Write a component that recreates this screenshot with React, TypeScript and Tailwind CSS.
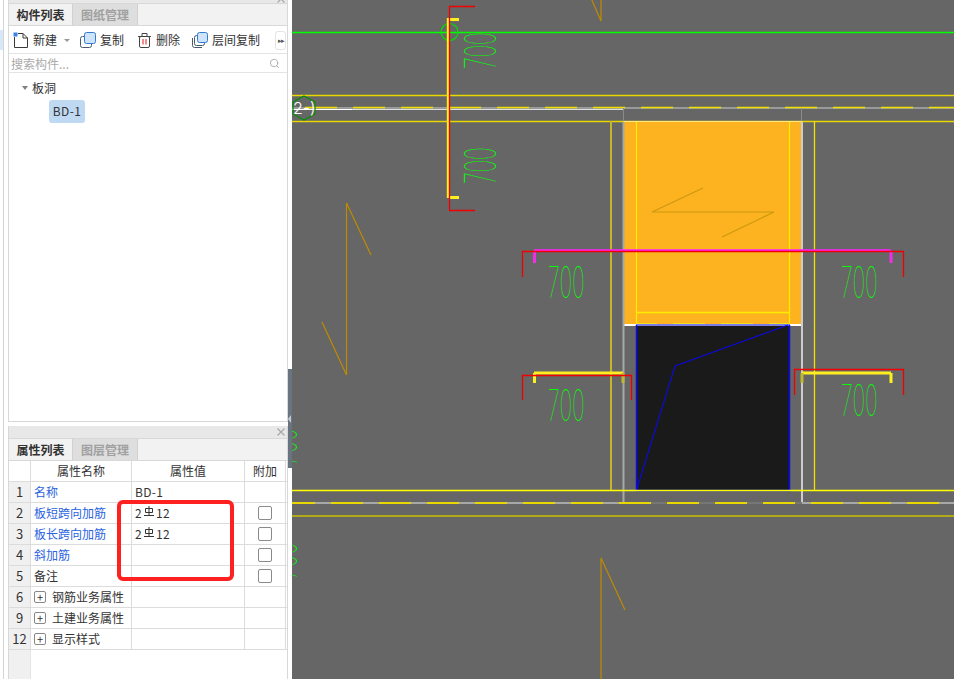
import React from "react";
import { Search } from "lucide-react";

const font = { fontFamily: '"Noto Sans CJK SC", sans-serif' };

function Num({ x, y, r }: { x: number; y: number; r?: boolean }) {
  return (
    <text
      transform={`translate(${x} ${y}) ${r ? "rotate(-90)" : ""} scale(0.5 1)`}
      fontFamily="Inter, sans-serif"
      fontWeight={100}
      fontSize={43}
      fill="#00ff00"
    >
      700
    </text>
  );
}

function L({ d, c, w = 1, dash, off }: { d: string; c: string; w?: number; dash?: string; off?: number }) {
  return <path d={d} stroke={c} strokeWidth={w} fill="none" strokeDasharray={dash} strokeDashoffset={off} />;
}

function Canvas() {
  const brown = "#c08a00";
  const red = "#f00000";
  return (
    <svg width={662} height={679} viewBox="292 0 662 679" className="block">
      <rect x={292} y={0} width={662} height={679} fill="#666666" />
      {/* brown zigzags */}
      <path d="M591 -2L601 21V-2" stroke={brown} strokeWidth={1.2} fill="none" />
      <path d="M371 255L346.5 203V375L322 322" stroke={brown} strokeWidth={1.2} fill="none" />
      <path d="M625 610L601 558V679" stroke={brown} strokeWidth={1.2} fill="none" />
      {/* green axis */}
      <L d="M292 32.5H954" c="#00ff00" w={1.4} />
      {/* upper beams */}
      <L d="M292 95.5H954" c="#e8d800" w={1.6} />
      <L d="M292 121.5H954" c="#e8d800" w={1.6} />
      <L d="M292 108H954" c="#9a9a9a" w={2} />
      <L d="M292 109.5H623" c="#dddddd" />
      <L d="M292 109.5H352" c="#ffffff" />
      <L d="M292 107.5H954" c="#f0e000" w={1.4} dash="32 16" off={-13} />
      <L d="M623.5 108V121M801.5 108V121" c="#8a8a8a" />
      {/* orange slab */}
      <rect x={624} y={121} width={178} height={204} fill="#fdb21f" />
      <L d="M624 121.5H802" c="#fde88a" />
      <path d="M703 188L652 212H774L722 237" stroke="#cc9a10" strokeWidth={1.2} fill="none" />
      <L d="M636.5 122V325M789.5 122V325" c="#ffee00" w={1.2} />
      <L d="M636 312.5H790" c="#ffee00" w={1.4} />
      <L d="M636 323.5H790" c="#f0e020" w={1.2} dash="32 16" off={11} />
      {/* black opening */}
      <rect x={636} y={325} width={153.5} height={165} fill="#1a1a1a" />
      <L d="M624 325H802" c="#ffffff" w={2} />
      <L d="M636 325H790" c="#7b7be8" w={2} />
      <L d="M636.5 325V490.5H789.5V325" c="#0808ff" w={1.5} />
      <path d="M636.5 490L675 366L788 325" stroke="#0808ff" fill="none" />
      {/* verticals */}
      <L d="M611 121V490" c="#c4b52a" w={2} />
      <L d="M814.5 121V490" c="#f0e400" w={1.3} />
      <L d="M623.5 122V503" c="#a8a8a8" w={2} />
      <L d="M802 122V503" c="#cccccc" w={2} />
      {/* lower beams */}
      <L d="M292 490.5H954" c="#ffff00" w={1.4} />
      <L d="M292 503H954" c="#a8a8a8" w={2} />
      <L d="M624 503H802" c="#777777" w={2} />
      <L d="M292 503H954" c="#e8d800" w={2} dash="32 16" off={9} />
      <L d="M292 516H954" c="#b0aa18" w={2} />
      {/* top vertical section */}
      <circle cx={449.5} cy={32} r={8.5} stroke="#00e000" strokeWidth={1.2} fill="none" />
      <L d="M448 18V198" c="#ffee20" w={2.4} />
      <L d="M449 19.5H459M449 197.5H459" c="#ffee20" w={3} />
      <L d="M449.5 6V210M449 6.5H475M449 210.5H475" c={red} w={1.3} />
      {/* section marks */}
      <L d="M534 250.5H891" c="#ff20ff" w={2.4} />
      <L d="M534.5 251V263M891 251V263" c="#f030e8" w={3} />
      <L d="M522.5 277V251.5H903.5V277" c={red} w={1.3} />
      <L d="M534 373H623" c="#ffee20" w={3} />
      <L d="M534.5 373V383" c="#ffee20" w={3} />
      <L d="M623 373V383" c="#c0b830" w={3} />
      <L d="M522.5 400V375.5H631.5V400" c={red} w={1.3} />
      <L d="M802 373H891" c="#ffee20" w={3} />
      <L d="M891 373V383" c="#ffee20" w={3} />
      <L d="M802 373V383" c="#c0b830" w={3} />
      <L d="M794.5 395V369.5H903.5V395" c={red} w={1.3} />
      {/* labels */}
      <Num x={548} y={298} />
      <Num x={841} y={298} />
      <Num x={548} y={421} />
      <Num x={841} y={416} />
      <Num x={496} y={69} r />
      <Num x={496} y={184} r />
      <Num x={297} y={465} r />
      <Num x={297} y={579} r />
      {/* axis bubble */}
      <path d="M304 96L315 102V114L304 120L293 114V102Z" stroke="#0c8c0c" strokeWidth={1.3} fill="none" />
      <text x={293} y={114} fontFamily="Inter, sans-serif" fontWeight={300} fontSize={16} fill="#ffffff">
        2-)
      </text>
    </svg>
  );
}

function NewIcon() {
  return (
    <svg width={16} height={16} viewBox="0 0 16 16" className="shrink-0">
      <path d="M1.5 5V15.5H14.5V6L10 1.5H5" stroke="#3a3a3a" fill="none" />
      <path d="M10 1.5V6H14.5" stroke="#3a3a3a" fill="none" />
      <rect x={0.5} y={0.5} width={4} height={4} fill="#3b82e8" />
    </svg>
  );
}
function CopyIcon() {
  return (
    <svg width={16} height={16} viewBox="0 0 16 16" className="shrink-0">
      <rect x={0.5} y={4.5} width={11} height={11} rx={2} fill="#fff" stroke="#4a5a6a" />
      <rect x={4.5} y={0.5} width={11} height={11} rx={2} fill="#cfe3fa" stroke="#2e7bd8" />
    </svg>
  );
}
function TrashIcon() {
  return (
    <svg width={13} height={15} viewBox="0 0 13 15" className="shrink-0">
      <path d="M0 3.5H13M4 3V.5H9V3" stroke="#444" fill="none" />
      <rect x={1.5} y={3.5} width={10} height={11} rx={1.5} fill="#fff" stroke="#444" />
      <path d="M5 6V11.5M8 6V11.5" stroke="#e01818" fill="none" />
    </svg>
  );
}
function FloorCopyIcon() {
  return (
    <svg width={16} height={16} viewBox="0 0 16 16" className="shrink-0">
      <path d="M.5 6V13.5Q.5 15.5 2.5 15.5H10" stroke="#4a5a6a" fill="none" />
      <rect x={2.5} y={3.5} width={10} height={10} rx={2} fill="#fff" stroke="#4a5a6a" />
      <rect x={5.5} y={0.5} width={10} height={10} rx={2} fill="#cfe3fa" stroke="#2e7bd8" />
    </svg>
  );
}
function SteelGlyph() {
  return (
    <svg width={10} height={11} viewBox="0 0 10 11" className="shrink-0 mb-[3px] mx-[2px]">
      <path d="M5 0V9M1.5 2.5H8.5V6.5H1.5ZM0 9.5H10" stroke="#333" fill="none" />
    </svg>
  );
}
function CloseX({ c = "#a8a8a8" }: { c?: string }) {
  return (
    <svg width={8} height={8} viewBox="0 0 8 8" className="block">
      <path d="M.5 .5L7.5 7.5M7.5 .5L.5 7.5" stroke={c} strokeWidth={1.2} />
    </svg>
  );
}

function Tabs({ a, b }: { a: string; b: string }) {
  return (
    <div className="flex h-[23px] shrink-0 border-t border-b border-[#d8d8d8] bg-[#f2f2f2] text-[12px] leading-[21px]">
      <div className="w-[64px] text-center font-bold text-[#333] bg-[#f2f2f2] border-r border-[#d0d0d0]">{a}</div>
      <div className="w-[65px] text-center font-bold text-[#a0a0a0] bg-[#dedede] border-r border-[#d0d0d0]">{b}</div>
    </div>
  );
}

type Row = { n: string; name: string; blue?: boolean; val?: React.ReactNode; check?: boolean; plus?: boolean };

const steel = (
  <span className="flex items-center">
    2<SteelGlyph />12
  </span>
);

const rows: Row[] = [
  { n: "1", name: "名称", blue: true, val: "BD-1" },
  { n: "2", name: "板短跨向加筋", blue: true, val: steel, check: true },
  { n: "3", name: "板长跨向加筋", blue: true, val: steel, check: true },
  { n: "4", name: "斜加筋", blue: true, check: true },
  { n: "5", name: "备注", check: true },
  { n: "6", name: "钢筋业务属性", plus: true },
  { n: "9", name: "土建业务属性", plus: true },
  { n: "12", name: "显示样式", plus: true },
];

export default function App() {
  return (
    <div className="flex w-[954px] h-[679px] overflow-hidden bg-white text-[12px] text-[#333]" style={font}>
      {/* far-left sliver */}
      <div className="w-[8px] shrink-0 flex flex-col">
        <div className="w-[4px] h-full border-r border-[#d4d4d4] pt-[30px]">
          <div className="w-[3px] h-[20px] bg-[#d8e8f8]" />
        </div>
      </div>

      {/* panels */}
      <div className="w-[280px] shrink-0 flex flex-col">
        <section className="h-[422px] flex flex-col border-x border-b border-[#d8d8d8] bg-white">
          <div className="h-[3px] bg-[#e8e8e8] overflow-hidden flex justify-end pr-[2px] shrink-0">
            <div className="-mt-[5px]">
              <CloseX />
            </div>
          </div>
          <Tabs a="构件列表" b="图纸管理" />
          <div className="flex items-center h-[28px] shrink-0 border-b border-[#e4e4e4] pl-[4px] pt-[1px]">
            <NewIcon />
            <span className="ml-[4px] text-[#333]">新建</span>
            <span className="ml-[7px] border-x-[3px] border-x-transparent border-t-[3px] border-t-[#999]" />
            <span className="ml-[10px]"><CopyIcon /></span>
            <span className="ml-[4px]">复制</span>
            <span className="ml-[14px]"><TrashIcon /></span>
            <span className="ml-[5px]">删除</span>
            <span className="ml-[12px]"><FloorCopyIcon /></span>
            <span className="ml-[4px]">层间复制</span>
            <span className="ml-[15px] w-[11px] h-[19px] flex items-center justify-center border border-[#e4e4e4] rounded-[3px] text-[7px] tracking-[-1px] text-[#555]">▸▸</span>
          </div>
          <div className="flex items-center justify-between h-[19px] shrink-0 border-b border-[#e4e4e4] pl-[2px] pr-[7px] pt-[1px] text-[#aaa]">
            <span>搜索构件...</span>
            <Search size={11} color="#aaa" strokeWidth={2} />
          </div>
          <div className="flex items-center h-[18px] mt-[6px] pl-[13px]">
            <span className="border-x-[3.5px] border-x-transparent border-t-[4px] border-t-[#808080]" />
            <span className="ml-[4px]">板洞</span>
          </div>
          <div className="mt-[3px] ml-[40px] w-[36px] h-[23px] rounded-[3px] bg-[#c0d9f2] text-center leading-[22px] tracking-[0.4px] text-[#333]">BD-1</div>
        </section>

        <section className="mt-[4px] flex-1 flex flex-col border-x border-[#d8d8d8] bg-white relative">
          <div className="h-[12px] bg-[#e8e8e8] flex items-center justify-end pr-[2px] shrink-0">
            <CloseX />
          </div>
          <Tabs a="属性列表" b="图层管理" />
          <div className="flex-1 relative flex flex-col">
            <div className="flex h-[21px] shrink-0 border-b border-[#dcdcdc] leading-[20px]">
              <div className="w-[22px] border-r border-[#dcdcdc]" />
              <div className="w-[101px] border-r border-[#dcdcdc] text-center">属性名称</div>
              <div className="w-[113px] border-r border-[#dcdcdc] text-center">属性值</div>
              <div className="w-[41px] border-r border-[#dcdcdc] text-center">附加</div>
            </div>
            {rows.map((r) => (
              <div key={r.n} className="flex h-[21px] shrink-0 border-b border-[#dcdcdc] leading-[20px]">
                <div className="w-[22px] border-r border-[#dcdcdc] bg-[#f0f0f0] text-center text-[13px]">{r.n}</div>
                <div className={`w-[101px] border-r border-[#dcdcdc] flex items-center pl-[3px] ${r.blue ? "text-[#2a62e0]" : "text-[#333]"}`}>
                  {r.plus && (
                    <span className="w-[12px] h-[12px] mr-[6px] border border-[#888] rounded-[2px] flex items-center justify-center text-[11px] leading-none">+</span>
                  )}
                  {r.name}
                </div>
                <div className="w-[113px] border-r border-[#dcdcdc] pl-[3px] flex items-center tracking-[0.3px]">{r.val}</div>
                <div className="w-[41px] border-r border-[#dcdcdc] flex items-center justify-center">
                  {r.check && <span className="w-[14px] h-[14px] border border-[#8a8a8a] rounded-[2px] bg-white" />}
                </div>
              </div>
            ))}
            <div className="flex-1 flex">
              <div className="w-[22px] bg-[#f0f0f0] border-r border-[#e4e4e4]" />
            </div>
            {/* red annotation */}
            <div className="absolute left-[108px] top-[39px] w-[117px] h-[81px] border-[4px] border-[#ff2020] rounded-[6px]" />
          </div>
        </section>
      </div>

      {/* splitter */}
      <div className="w-[4px] shrink-0 flex flex-col pt-[369px]">
        <div className="h-[99px] bg-[#687480] flex items-center">
          <span className="border-y-[4px] border-y-transparent border-r-[3px] border-r-[#c8ccd0]" />
        </div>
      </div>

      {/* drawing canvas */}
      <div className="flex-1 overflow-hidden">
        <Canvas />
      </div>
    </div>
  );
}
